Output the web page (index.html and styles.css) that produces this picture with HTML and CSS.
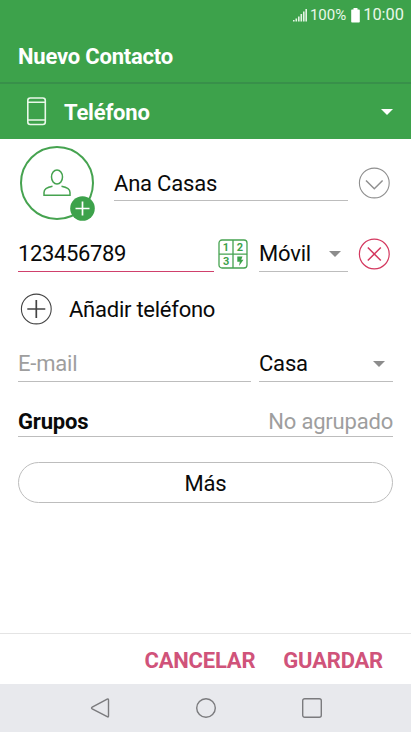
FILE: index.html
```
<!DOCTYPE html>
<html lang="es">
<head>
  <meta charset="UTF-8" />
  <meta name="viewport" content="width=device-width, initial-scale=1">
  <title>Nuevo Contacto</title>
  <link rel="stylesheet" href="styles.css">
</head>
<body>
  <div class="statusbar">
    <svg class="signal" width="14" height="14" viewBox="0 0 14 14">
      <path d="M.8 12v1.500M3.300 10.500v3M5.800 8.500v5M8.300 6v7.500M10.800 3.500v10M13.200 1v12.500" fill="none" stroke="#e4f5e5" stroke-width="1.600"/>
    </svg>
    <span class="percent">100%</span>
    <svg class="battery" width="9" height="15" viewBox="0 0 9 15">
      <path d="M2.500 0h4v1.500H8q.8 0 .8.800v11.400q0 .8-.8.800H1q-.8 0-.8-.800V2.300q0-.8.800-.8h1.500z" fill="#fff"/>
    </svg>
    <span class="clock">10:00</span>
  </div>

  <header class="titlebar"><h1>Nuevo Contacto</h1></header>

  <div class="account">
    <svg width="20" height="29" viewBox="0 0 20 29" fill="none" stroke="#e9f8e9" stroke-width="1.600">
      <rect x=".8" y="1" width="17.500" height="26.500" rx="2.500"/>
      <path d="M1 5.200h17.500M1 23h17.500"/>
    </svg>
    <span class="account-name">Teléfono</span>
    <i class="caret white"></i>
  </div>

  <main class="form">
    <div class="row row-name">
      <div class="avatar">
        <svg width="28" height="28" viewBox="0 0 28 28" fill="none" stroke="#46a350" stroke-width="1.500">
          <ellipse cx="14" cy="8" rx="5.500" ry="7"/>
          <path d="M9.500 17.300C4 18.300 1 20.500 1 23.500V26.200h26v-2.700c0-3-3-5.200-8.500-6.200"/>
        </svg>
        <svg class="badge" width="25" height="25" viewBox="0 0 25 25">
          <circle cx="12.500" cy="12.500" r="12.300" fill="#3da24b"/>
          <path d="M12.500 5.500v14M5.500 12.500h14" stroke="#fff" stroke-width="1.700"/>
        </svg>
      </div>
      <div class="field name">Ana Casas</div>
      <svg class="round" width="32" height="32" viewBox="0 0 32 32" fill="none" stroke="#8f8f8f">
        <circle cx="16.300" cy="16" r="14.900" stroke-width="1.100"/>
        <path d="M8 13.500l8.300 8.300 8.300-8.300" stroke-width="1.500"/>
      </svg>
    </div>

    <div class="row row-phone">
      <div class="field phone">123456789</div>
      <svg class="keypad" width="30" height="30" viewBox="0 0 30 30">
        <g fill="none" stroke="#46a350" stroke-width="1.300">
          <rect x="1" y="1" width="28" height="28" rx="3"/>
          <path d="M15 1v28M1 15.200h28"/>
        </g>
        <g class="digits">
          <text x="8" y="12">1</text>
          <text x="21.800" y="12">2</text>
          <text x="8.200" y="25.800">3</text>
        </g>
        <path d="M19.300 17.500h5.200l-1.300 3.200h2.300l-4.500 6.300.8-4.300h-2.500z" fill="#3da24b"/>
      </svg>
      <div class="field type">Móvil<i class="caret"></i></div>
      <svg class="round" width="32" height="32" viewBox="0 0 32 32" fill="none" stroke="#d4385f">
        <circle cx="16.300" cy="16" r="14.900" stroke-width="1.200"/>
        <path d="M9.800 9.500l13 13M22.800 9.500l-13 13" stroke-width="1.500"/>
      </svg>
    </div>

    <div class="row row-add">
      <svg width="32" height="32" viewBox="0 0 32 32" fill="none" stroke="#444">
        <circle cx="16.300" cy="16" r="14.900" stroke-width="1.100"/>
        <path d="M16.300 7v18M7.300 16h18" stroke-width="1.700"/>
      </svg>
      <span>Añadir teléfono</span>
    </div>

    <div class="row row-email">
      <div class="field email">E-mail</div>
      <div class="field email-type">Casa<i class="caret"></i></div>
    </div>

    <div class="field groups"><b>Grupos</b><span class="hint">No agrupado</span></div>

    <div class="more">Más</div>
  </main>

  <footer class="actions">
    <span>CANCELAR</span>
    <span>GUARDAR</span>
  </footer>

  <nav class="navbar">
    <svg width="22" height="22" viewBox="0 0 22 22"><path d="M19.500 3v16q0 1.500-1.300.7L3.200 11.800q-1.300-.8 0-1.600l15-8q1.300-.7 1.300.8z"/></svg>
    <svg width="22" height="22" viewBox="0 0 22 22"><circle cx="11" cy="11" r="9.300"/></svg>
    <svg width="22" height="22" viewBox="0 0 22 22"><rect x="1.700" y="1.700" width="18.600" height="18.600" rx="2"/></svg>
  </nav>
</body>
</html>
```
FILE: styles.css
```
* { box-sizing: border-box; }
body {
  margin: 0;
  height: 732px;
  display: flex;
  flex-direction: column;
  background: #fff;
  color: #0a0a0a;
  font: 22px/26px Roboto, sans-serif;
  letter-spacing: -0.2px;
  overflow: hidden;
}
svg { display: block; flex: none; }

.statusbar {
  height: 30px;
  display: flex;
  align-items: center;
  justify-content: flex-end;
  padding-right: 7px;
  background: #3da24b;
  color: #e9f8e9;
  letter-spacing: 0;
}
.percent { margin-left: 3px; font-size: 15px; }
.battery { margin-left: 5px; }
.clock { margin-left: 3px; font-size: 16.4px; }

.titlebar {
  height: 54px;
  padding: 14px 18px 0;
  background: #3da24b;
  border-bottom: 2px solid #38904a;
  color: #fff;
}
.titlebar h1 { margin: 0; font-size: 22px; line-height: 26px; }

.account {
  height: 55px;
  display: flex;
  align-items: center;
  padding: 0 18px 0 27px;
  background: #3da24b;
  color: #fff;
}
.account-name { margin: 2px 0 0 17px; font-weight: bold; }

.caret {
  margin-left: auto;
  border: 6px solid transparent;
  border-top-color: #8c8c8c;
  border-bottom: 0;
}
.caret.white { border-top-color: #fff; }

.form { flex: 1; padding: 0 18px; }
.row { display: flex; }
.field {
  display: flex;
  align-items: center;
  border-bottom: 1px solid #bdbdbd;
}

.row-name { height: 88px; padding: 7px 0 0 2px; }
.avatar {
  position: relative;
  width: 74px;
  height: 74px;
  display: flex;
  align-items: center;
  justify-content: center;
  border: 2px solid #46a350;
  border-radius: 50%;
}
.badge { position: absolute; right: -3px; bottom: -3px; }
.name { width: 234px; height: 36px; margin: 19px 0 0 20px; padding-top: 2px; }
.row-name .round { margin: 21px 0 0 10px; }

.row-phone { height: 55px; padding-top: 9px; }
.phone {
  width: 196px;
  height: 36px;
  border-bottom-color: #d0406c;
  letter-spacing: -0.35px;
}
.keypad { margin: 3px 0 0 4px; }
.digits {
  fill: #3da24b;
  font: bold 11px Roboto, sans-serif;
  letter-spacing: 0;
  text-anchor: middle;
}
.type { width: 89px; height: 36px; margin-left: 11px; padding-right: 7px; }
.row-phone .round { margin: 2px 0 0 10px; }

.row-add { height: 54px; align-items: center; padding-left: 2px; }
.row-add span { margin: 2px 0 0 17px; letter-spacing: -0.25px; }

.row-email { gap: 8px; height: 46px; padding-top: 10px; }
.email { width: 233px; color: #9e9e9e; }
.email-type { flex: 1; padding-right: 8px; }

.groups {
  height: 32px;
  margin-top: 23px;
  padding-top: 2px;
  justify-content: space-between;
}
.hint { color: #9e9e9e; }

.more {
  height: 41px;
  margin-top: 25px;
  border: 1px solid #bdbdbd;
  border-radius: 21px;
  line-height: 42px;
  text-align: center;
}

.actions {
  height: 51px;
  display: flex;
  align-items: center;
  justify-content: flex-end;
  gap: 28px;
  padding: 3px 28px 0 0;
  border-top: 1px solid #e4e4e4;
  color: #d0537a;
  font-weight: bold;
}

.navbar {
  height: 48px;
  display: flex;
  align-items: center;
  justify-content: center;
  gap: 84px;
  background: #e8e9ed;
}
.navbar svg { fill: none; stroke: #7b7b7e; stroke-width: 1.4; }
```
